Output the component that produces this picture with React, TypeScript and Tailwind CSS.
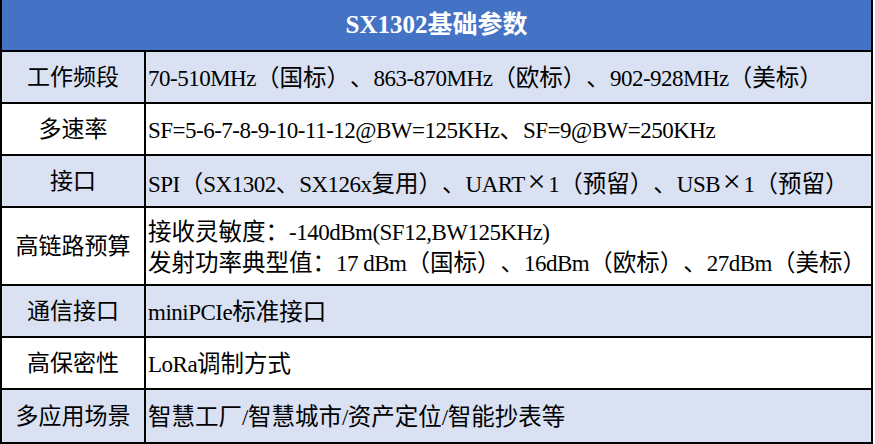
import React from 'react'

interface Row {
    label: string
    lines: string[]
    tall?: boolean
}

const rows: Row[] = [
    { label: '工作频段', lines: ['70-510MHz（国标）、863-870MHz（欧标）、902-928MHz（美标）'] },
    { label: '多速率', lines: ['SF=5-6-7-8-9-10-11-12@BW=125KHz、SF=9@BW=250KHz'] },
    { label: '接口', lines: ['SPI（SX1302、SX126x复用）、UART×1（预留）、USB×1（预留）'] },
    {
        label: '高链路预算',
        lines: ['接收灵敏度：-140dBm(SF12,BW125KHz)', '发射功率典型值：17 dBm（国标）、16dBm（欧标）、27dBm（美标）'],
        tall: true,
    },
    { label: '通信接口', lines: ['miniPCIe标准接口'] },
    { label: '高保密性', lines: ['LoRa调制方式'] },
    { label: '多应用场景', lines: ['智慧工厂/智慧城市/资产定位/智能抄表等'] },
]

// latin runs are a touch wider in Times than in the original half-width font
const Mixed: React.FC<{ text: string }> = ({ text }) => (
    <>
        {text.split(/([\x20-\x7E]+|×)/).map((part, i) => {
            if (part === '×')
                return (
                    <span key={i} className="inline-block w-[23.5px] text-center text-[32px] leading-none font-light">
                        ×
                    </span>
                )
            if (/^[\x20-\x7E]+$/.test(part))
                return (
                    <span key={i} className="text-[23px] tracking-[-0.5px]">
                        {part}
                    </span>
                )
            return <span key={i}>{part}</span>
        })}
    </>
)

const App: React.FC = () => {
    return (
        <div className="w-[875px] h-[444px] bg-white font-['Liberation_Serif','Noto_Sans_CJK_SC',serif] text-black [text-spacing-trim:space-all]">
            <div className="w-[873px] border-x-2 border-b-2 border-black">
                <div className="h-[52px] bg-[#4472c4] border-b-2 border-black flex items-center justify-center text-white font-bold text-[25px]">
                    SX1302基础参数
                </div>
                {rows.map((row, i) => (
                    <div
                        key={row.label}
                        className={`flex ${row.tall ? 'h-[78px]' : 'h-[52px]'} ${i % 2 === 0 ? 'bg-[#d9e1f2]' : 'bg-white'} ${
                            i < rows.length - 1 ? 'border-b-2 border-black' : ''
                        }`}
                    >
                        <div className="w-[144px] shrink-0 border-r-2 border-black flex items-center justify-center text-[23px] pt-[3px]">
                            {row.label}
                        </div>
                        <div className="flex-1 pl-[2px] flex flex-col justify-center text-[23.5px] leading-[31px] pt-[3px] whitespace-nowrap">
                            {row.lines.map((line) => (
                                <div key={line}>
                                    <Mixed text={line} />
                                </div>
                            ))}
                        </div>
                    </div>
                ))}
            </div>
        </div>
    )
}

export default App
